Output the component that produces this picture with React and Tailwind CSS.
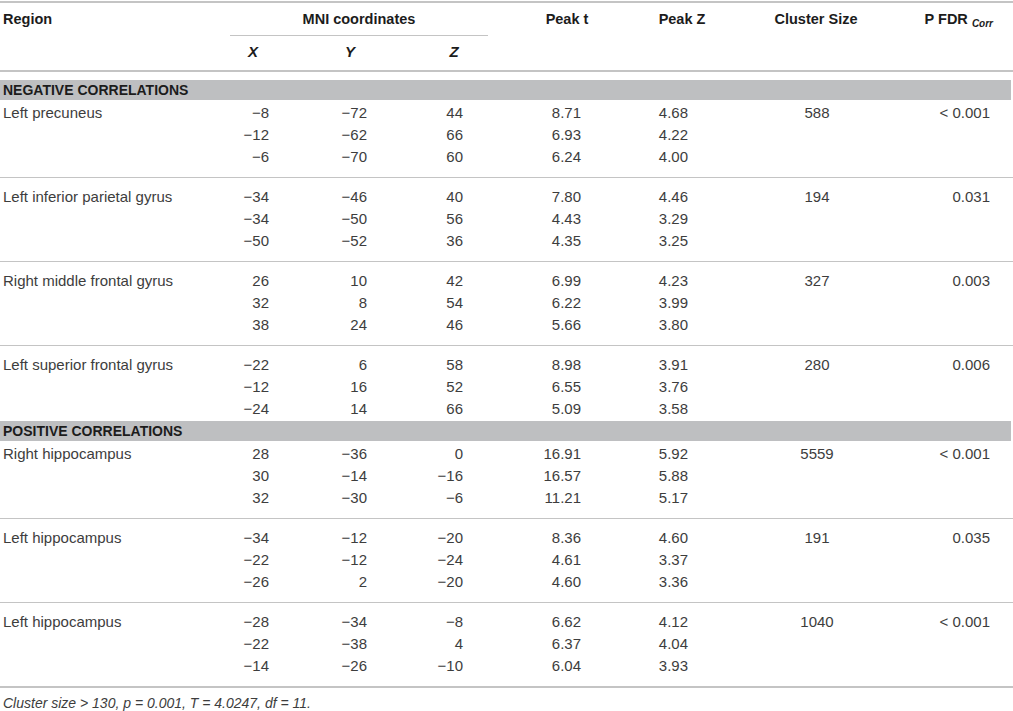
import React from "react";

const groups = [
  { section: "NEGATIVE CORRELATIONS" },
  {
    region: "Left precuneus",
    cluster: "588",
    p: "< 0.001",
    rows: [
      ["−8", "−72", "44", "8.71", "4.68"],
      ["−12", "−62", "66", "6.93", "4.22"],
      ["−6", "−70", "60", "6.24", "4.00"],
    ],
  },
  {
    region: "Left inferior parietal gyrus",
    cluster: "194",
    p: "0.031",
    rows: [
      ["−34", "−46", "40", "7.80", "4.46"],
      ["−34", "−50", "56", "4.43", "3.29"],
      ["−50", "−52", "36", "4.35", "3.25"],
    ],
  },
  {
    region: "Right middle frontal gyrus",
    cluster: "327",
    p: "0.003",
    rows: [
      ["26", "10", "42", "6.99", "4.23"],
      ["32", "8", "54", "6.22", "3.99"],
      ["38", "24", "46", "5.66", "3.80"],
    ],
  },
  {
    region: "Left superior frontal gyrus",
    cluster: "280",
    p: "0.006",
    rows: [
      ["−22", "6", "58", "8.98", "3.91"],
      ["−12", "16", "52", "6.55", "3.76"],
      ["−24", "14", "66", "5.09", "3.58"],
    ],
  },
  { section: "POSITIVE CORRELATIONS" },
  {
    region: "Right hippocampus",
    cluster: "5559",
    p: "< 0.001",
    rows: [
      ["28", "−36", "0", "16.91", "5.92"],
      ["30", "−14", "−16", "16.57", "5.88"],
      ["32", "−30", "−6", "11.21", "5.17"],
    ],
  },
  {
    region: "Left hippocampus",
    cluster: "191",
    p: "0.035",
    rows: [
      ["−34", "−12", "−20", "8.36", "4.60"],
      ["−22", "−12", "−24", "4.61", "3.37"],
      ["−26", "2", "−20", "4.60", "3.36"],
    ],
  },
  {
    region: "Left hippocampus",
    cluster: "1040",
    p: "< 0.001",
    rows: [
      ["−28", "−34", "−8", "6.62", "4.12"],
      ["−22", "−38", "4", "6.37", "4.04"],
      ["−14", "−26", "−10", "6.04", "3.93"],
    ],
  },
];

function Group({ g, afterBand, beforeBand, last }) {
  const pt = afterBand ? "pt-[2px]" : "pt-[8px]";
  const pb = beforeBand ? "pb-[1px]" : "pb-[9px]";
  const border = beforeBand
    ? ""
    : last
    ? "border-b-2 border-[#c4c4c4]"
    : "border-b border-[#c4c4c4]";
  return (
    <div className={`${pt} ${pb} ${border}`}>
      {g.rows.map((r, i) => (
        <div
          key={i}
          className="grid grid-cols-[230px_39px_98px_96px_118px_119px_234px_56px_23px] h-[22px] leading-[22px] text-[15px] text-[#3d3d3d] whitespace-nowrap"
        >
          <div className="pl-[3px]">{i === 0 ? g.region : ""}</div>
          <div className="text-right">{r[0]}</div>
          <div className="text-right">{r[1]}</div>
          <div className="text-right">{r[2]}</div>
          <div className="text-right">{r[3]}</div>
          <div className="text-right pr-[12px]">{r[4]}</div>
          <div className="text-center">{i === 0 ? g.cluster : ""}</div>
          <div className="text-right">{i === 0 ? g.p : ""}</div>
          <div></div>
        </div>
      ))}
    </div>
  );
}

export default function App() {
  return (
    <div
      className="w-[1013px] h-[711px] bg-white overflow-hidden"
      style={{ fontFamily: '"Liberation Sans", Arial, sans-serif' }}
    >
      <div className="mt-[1px] border-t-2 border-[#c4c4c4]">
        <div className="flex h-[32px] pt-[1px] items-center text-[14.5px] font-bold text-[#1c1c1c] whitespace-nowrap">
          <div className="w-[230px] pl-[3px]">Region</div>
          <div className="w-[258px] text-center">MNI coordinates</div>
          <div className="w-[158px] text-center">Peak t</div>
          <div className="w-[72px] text-center">Peak Z</div>
          <div className="w-[196px] text-center">Cluster Size</div>
          <div className="w-[99px] text-right pr-[20px]">
            P FDR{" "}
            <span className="text-[10px] italic align-[-3px]">Corr</span>
          </div>
        </div>
        <div className="flex border-b-2 border-[#c4c4c4]">
          <div className="w-[230px]"></div>
          <div className="w-[258px] border-t border-[#c4c4c4] flex h-[35px] pt-[5px] text-[15px] font-bold italic text-[#1c1c1c] leading-[22px]">
            <div className="w-[46px] text-center">X</div>
            <div className="w-[148px] text-center">Y</div>
            <div className="w-[60px] text-center">Z</div>
          </div>
        </div>
      </div>
      <div className="mt-[8px]">
        {groups.map((g, i) => {
          if (g.section) {
            return (
              <div
                key={i}
                className="h-[20px] leading-[20px] bg-[#bebfc1] pl-[3px] text-[14px] font-bold text-[#1c1c1c] w-[1011px]"
              >
                {g.section}
              </div>
            );
          }
          const prev = groups[i - 1];
          const next = groups[i + 1];
          return (
            <Group
              key={i}
              g={g}
              afterBand={prev && prev.section}
              beforeBand={next && next.section}
              last={!next}
            />
          );
        })}
      </div>
      <div className="pl-[3px] pt-[5px] text-[14px] italic text-[#3d3d3d] leading-[20px] whitespace-nowrap">
        Cluster size &gt; 130, p = 0.001, T = 4.0247, df = 11.
      </div>
    </div>
  );
}
